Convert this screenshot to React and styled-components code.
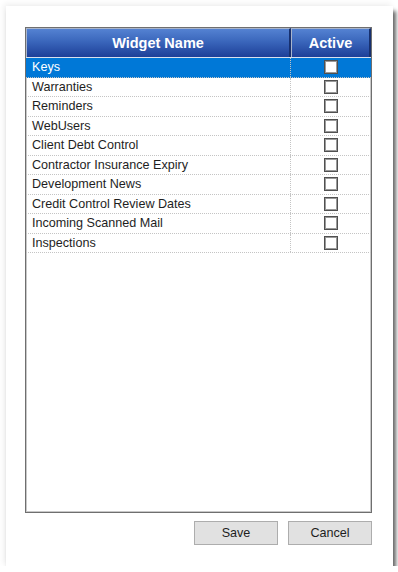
import React from "react";
import styled, { createGlobalStyle } from "styled-components";

const Global = createGlobalStyle`
  html, body { margin: 0; padding: 0; background: #ffffff; }
  body { font-family: "Liberation Sans", Arial, sans-serif; }
`;

const Panel = styled.div`
  margin: 6px 0 0 6px;
  width: 387px;
  height: 560px;
  box-sizing: border-box;
  background: #ffffff;
  padding: 21px 21px 21px 19px;
  display: flex;
  flex-direction: column;
  gap: 8px;
  box-shadow: 3px 5px 4px rgba(0, 0, 0, 0.6), -2px -2px 6px rgba(0, 0, 0, 0.07);
`;

const Grid = styled.div`
  flex: 1;
  border: 1px solid #6f6f6f;
  box-shadow: inset 0 0 0 1px #c8c8c8;
  background: #ffffff;
  display: flex;
  flex-direction: column;
`;

const HeaderRow = styled.div`
  display: grid;
  grid-template-columns: 265px 1fr;
  height: 29px;
  border-bottom: 1px solid #d9e1ee;
`;

const HeaderCell = styled.div`
  display: flex;
  align-items: center;
  justify-content: center;
  background: linear-gradient(#5482d2 0%, #3a66bb 45%, #1d3f98 100%);
  color: #ffffff;
  font-weight: bold;
  font-size: 14.5px;
  border-left: 1px solid #a9b5cc;
  border-top: 1px solid #a9b5cc;
  border-right: 2px solid #17306f;
  box-sizing: border-box;
`;

const Row = styled.div`
  display: grid;
  grid-template-columns: 265px 1fr;
  height: 19.5px;
  box-sizing: border-box;
  border-bottom: 1px dotted #c4c4c4;
  background: ${(p) => (p.$selected ? "#0078d7" : "transparent")};
  color: ${(p) => (p.$selected ? "#ffffff" : "#1e1e1e")};
`;

const NameCell = styled.div`
  display: flex;
  align-items: center;
  padding-left: 6px;
  font-size: 12.6px;
  border-right: 1px dotted #c4c4c4;
  white-space: nowrap;
`;

const CheckCell = styled.div`
  display: flex;
  align-items: center;
  justify-content: center;
  padding-right: 1px;
`;

const Box = styled.span`
  width: 12px;
  height: 12px;
  background: #ffffff;
  border: 1px solid #505050;
  box-shadow: inset 0 0 0 1px #9a9a9a;
`;

const Footer = styled.div`
  display: flex;
  justify-content: flex-end;
  gap: 10px;
`;

const Button = styled.button`
  width: 84px;
  height: 24px;
  background: #e1e1e1;
  border: 1px solid #adadad;
  font-family: "Liberation Sans", Arial, sans-serif;
  font-size: 12.6px;
  color: #1e1e1e;
  padding: 0;
`;

const items = [
  "Keys",
  "Warranties",
  "Reminders",
  "WebUsers",
  "Client Debt Control",
  "Contractor Insurance Expiry",
  "Development News",
  "Credit Control Review Dates",
  "Incoming Scanned Mail",
  "Inspections",
];

export default function App() {
  return (
    <>
      <Global />
      <Panel>
        <Grid>
          <HeaderRow>
            <HeaderCell>Widget Name</HeaderCell>
            <HeaderCell>Active</HeaderCell>
          </HeaderRow>
          {items.map((name, i) => (
            <Row key={name} $selected={i === 0}>
              <NameCell>{name}</NameCell>
              <CheckCell>
                <Box />
              </CheckCell>
            </Row>
          ))}
        </Grid>
        <Footer>
          <Button>Save</Button>
          <Button>Cancel</Button>
        </Footer>
      </Panel>
    </>
  );
}
